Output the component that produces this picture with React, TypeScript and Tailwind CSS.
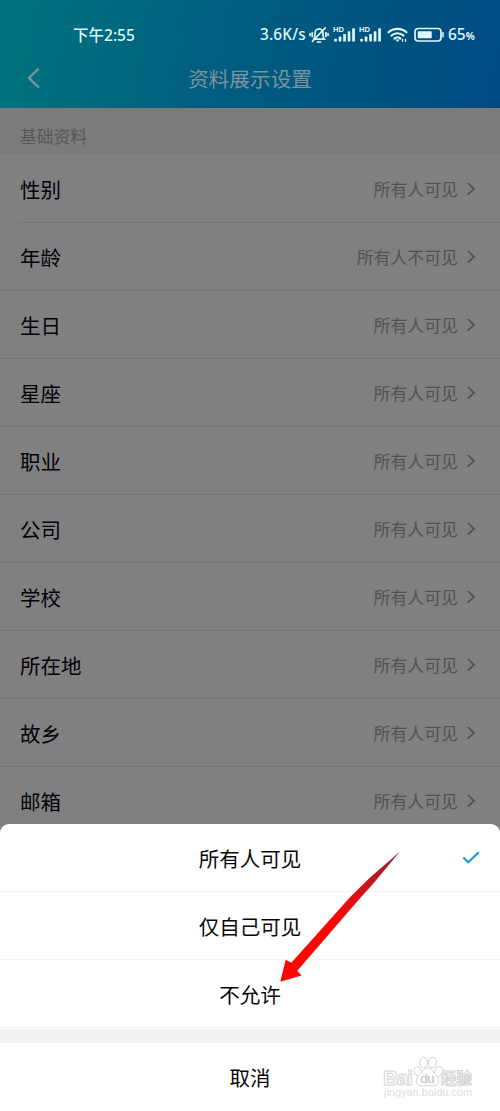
const profileRows = [
  { label: '性别', value: '所有人可见' },
  { label: '年龄', value: '所有人不可见' },
  { label: '生日', value: '所有人可见' },
  { label: '星座', value: '所有人可见' },
  { label: '职业', value: '所有人可见' },
  { label: '公司', value: '所有人可见' },
  { label: '学校', value: '所有人可见' },
  { label: '所在地', value: '所有人可见' },
  { label: '故乡', value: '所有人可见' },
  { label: '邮箱', value: '所有人可见' },
]

const options = [
  { label: '所有人可见', selected: true },
  { label: '仅自己可见', selected: false },
  { label: '不允许', selected: false },
]

function MutedBell() {
  return (
    <svg width="20" height="18" viewBox="0 0 20 18" fill="none" stroke="currentColor" strokeWidth="1.7" strokeLinecap="round">
      <path d="M5 13.2h10.4c-1-1.2-1.4-2.3-1.4-4.2V7c0-2.3-1.7-4.2-4-4.2S6 4.7 6 7v2c0 1.9-.2 3-1 4.2Z" />
      <path d="M8.5 16h3.2M3.3 15.5 16.3 1.8M3.2 6.500v4M1 7.500v2M16.900 6.500v4M19 7.500v2" />
    </svg>
  )
}

function HdSignal() {
  return (
    <svg width="24" height="18" viewBox="0 0 24 18" fill="currentColor">
      <text x="0" y="6.4" fontSize="7.6" fontWeight="700" textLength="11" lengthAdjust="spacingAndGlyphs" fontFamily="Liberation Sans, sans-serif">HD</text>
      <rect x="1.2" y="12.8" width="2.7" height="2.7" rx="0.6" />
      <rect x="5.7" y="10.5" width="2.7" height="5" rx="0.6" />
      <rect x="10.2" y="8" width="2.7" height="7.5" rx="0.6" />
      <rect x="14.7" y="5.2" width="2.7" height="10.3" rx="0.6" />
      <rect x="19.2" y="2.3" width="2.7" height="13.2" rx="0.6" />
    </svg>
  )
}

function Wifi() {
  return (
    <svg width="21" height="18" viewBox="0 0 21 18" fill="none" stroke="currentColor" strokeWidth="2.1" strokeLinecap="round">
      <path d="M1.5 6.3c5-4.6 13-4.6 18 0M4.500 9.600c3.500-3.200 8.500-3.200 12 0M7.500 12.600c1.700-1.500 4.300-1.500 6 0" />
      <path d="m8.400 13.600 2.100 2.300 2.100-2.300Z" fill="currentColor" stroke="none" />
      <path d="M15.600 13.300v2M18.600 13.300v2" strokeWidth="1.300" />
    </svg>
  )
}

function Battery() {
  return (
    <svg width="31" height="16" viewBox="0 0 31 16" fill="none">
      <rect x="1" y="1.500" width="26" height="12.500" rx="3.200" stroke="currentColor" strokeWidth="1.700" />
      <rect x="3.700" y="4.200" width="14" height="7.100" rx="0.800" fill="currentColor" />
      <path d="M29 5.800v4" stroke="currentColor" strokeWidth="1.600" strokeLinecap="round" />
    </svg>
  )
}

function StatusBar() {
  return (
    <div className="flex h-[50px] items-center pt-5 pl-[73px] text-[#dff6fb] font-['Noto_Sans',sans-serif]">
      <span className="w-[187px] text-[15.500px] leading-none font-medium whitespace-nowrap">
        <span className="font-['Noto_Sans_CJK_SC',sans-serif]">下午</span>2:55
      </span>
      <span className="w-[49px] text-[15.300px] leading-none font-medium tracking-[0.200px]">3.6K/s</span>
      <MutedBell />
      <span className="ml-1 flex gap-[2px]">
        <HdSignal />
        <HdSignal />
      </span>
      <span className="ml-1">
        <Wifi />
      </span>
      <span className="ml-[6px]">
        <Battery />
      </span>
      <span className="ml-[3px] flex items-baseline leading-none font-medium">
        <span className="text-[15.500px]">65</span>
        <span className="text-[10px] font-bold">%</span>
      </span>
    </div>
  )
}

function Header() {
  return (
    <header className="h-[108px] shrink-0 bg-[linear-gradient(100deg,#00747d_0%,#005f80_40%,#005580_70%,#004a84_100%)]">
      <StatusBar />
      <div className="flex h-[56px] items-center justify-between px-[26px] text-[#7c929d]">
        <svg className="w-[16px]" height="24" viewBox="0 0 16 24" fill="none" stroke="currentColor" strokeWidth="2.400">
          <path d="M12.700 2.500 3 12l9.700 9.500" />
        </svg>
        <h1 className="text-[20.700px] leading-none">资料展示设置</h1>
        <span className="w-[16px]" />
      </div>
    </header>
  )
}

function Watermark() {
  return (
    <svg className="absolute top-[1052px] left-[380px]" width="100" height="50" viewBox="0 0 100 50" fill="#fff" stroke="#d4d4d4" strokeWidth="1">
      <text x="3" y="33" fontSize="21" fontWeight="700" textLength="30" fontFamily="Liberation Sans, sans-serif">Bai</text>
      <ellipse cx="38" cy="19.500" rx="3.600" ry="4.800" transform="rotate(-25 38 19.500)" />
      <ellipse cx="43.700" cy="10.500" rx="4" ry="5.200" />
      <ellipse cx="52.500" cy="10.500" rx="4" ry="5.200" transform="rotate(12 52.500 10.500)" />
      <ellipse cx="58.500" cy="19.500" rx="3.700" ry="5" transform="rotate(25 58.500 19.500)" />
      <path d="M47.500 16c3.800 0 5 3.500 7.800 6.200 4 3.900 4.500 8.500 1 10.900-3 2-5.800.2-8.800.2s-5.800 1.800-8.800 0c-3.500-2.400-3-7.200 1-11 2.800-2.700 4-6.300 7.800-6.300Z" />
      <text x="40.500" y="31" fontSize="13" textLength="14" fontFamily="Liberation Sans, sans-serif" fill="#bbb" strokeWidth="0.300">du</text>
      <text x="61" y="32" fontSize="15.500" fontWeight="700" fontFamily="Noto Sans CJK SC, sans-serif">经验</text>
      <text x="4" y="44" fontSize="10" textLength="88" lengthAdjust="spacingAndGlyphs" fontFamily="Liberation Sans, sans-serif" fill="#dedede" stroke="none">jingyan.baidu.com</text>
    </svg>
  )
}

export default function App() {
  return (
    <div className="relative flex h-[1111px] w-[500px] flex-col overflow-hidden bg-[#808080] font-['Noto_Sans_CJK_SC',sans-serif]">
      <Header />

      {/* Dimmed settings list */}
      <div className="flex h-[46px] shrink-0 items-center bg-[#7b7b7c] pt-[10px] pl-5 text-[16.800px] leading-none text-[#565658]">
        基础资料
      </div>
      <ul className="h-[670px] shrink-0 overflow-hidden pt-px">
        {profileRows.map((row) => (
          <li key={row.label} className="flex h-[68px] items-center border-b border-[#757576] pt-px pr-[24px] pl-5 leading-none first:ml-5 first:pl-0">
            <span className="flex-1 text-[20.500px] text-[#020209]">{row.label}</span>
            <span className="text-[16.900px] text-[#525254]">{row.value}</span>
            <svg className="ml-[8px]" width="10" height="16" viewBox="0 0 10 16" fill="none" stroke="#4e4e50" strokeWidth="1.700">
              <path d="M1.800 2 8 7.800 1.800 13.600" />
            </svg>
          </li>
        ))}
      </ul>

      {/* Action sheet */}
      <div className="flex-1 rounded-t-[9px] bg-white text-[20.500px] leading-none text-[#08080a]">
        {options.map((option) => (
          <div key={option.label} className="relative flex h-[68px] items-center justify-center border-b border-[#f4f4f4] pt-px last:border-0">
            {option.label}
            {option.selected && (
              <svg className="absolute top-[26px] right-[20px]" width="18" height="16" viewBox="0 0 18 16" fill="none" stroke="#1a9ad6" strokeWidth="2.200">
                <path d="m1.300 7.500 4.900 4.800L16.800 2.300" />
              </svg>
            )}
          </div>
        ))}
        <div className="mt-px h-[14px] bg-[#f3f3f3]" />
        <div className="flex h-[68px] items-center justify-center pt-px">取消</div>
      </div>

      <svg className="absolute top-[846px] left-[275px]" width="130" height="140" viewBox="275 846 130 140">
        <defs>
          <linearGradient id="arrow" x1="1" y1="0" x2="0" y2="1">
            <stop offset="0" stopColor="#8a3030" />
            <stop offset="0.150" stopColor="#b01c20" />
            <stop offset="0.400" stopColor="#e80c10" />
            <stop offset="0.600" stopColor="#fb0505" />
          </linearGradient>
        </defs>
        <path d="M400 851.500 369.500 878 350 897.300 291.300 962.700 285.700 959.700 280.300 981.700 301.500 975.500 297.300 970.700 360 898.300 372.500 884.500Z" fill="url(#arrow)" />
      </svg>

      <Watermark />
    </div>
  )
}
